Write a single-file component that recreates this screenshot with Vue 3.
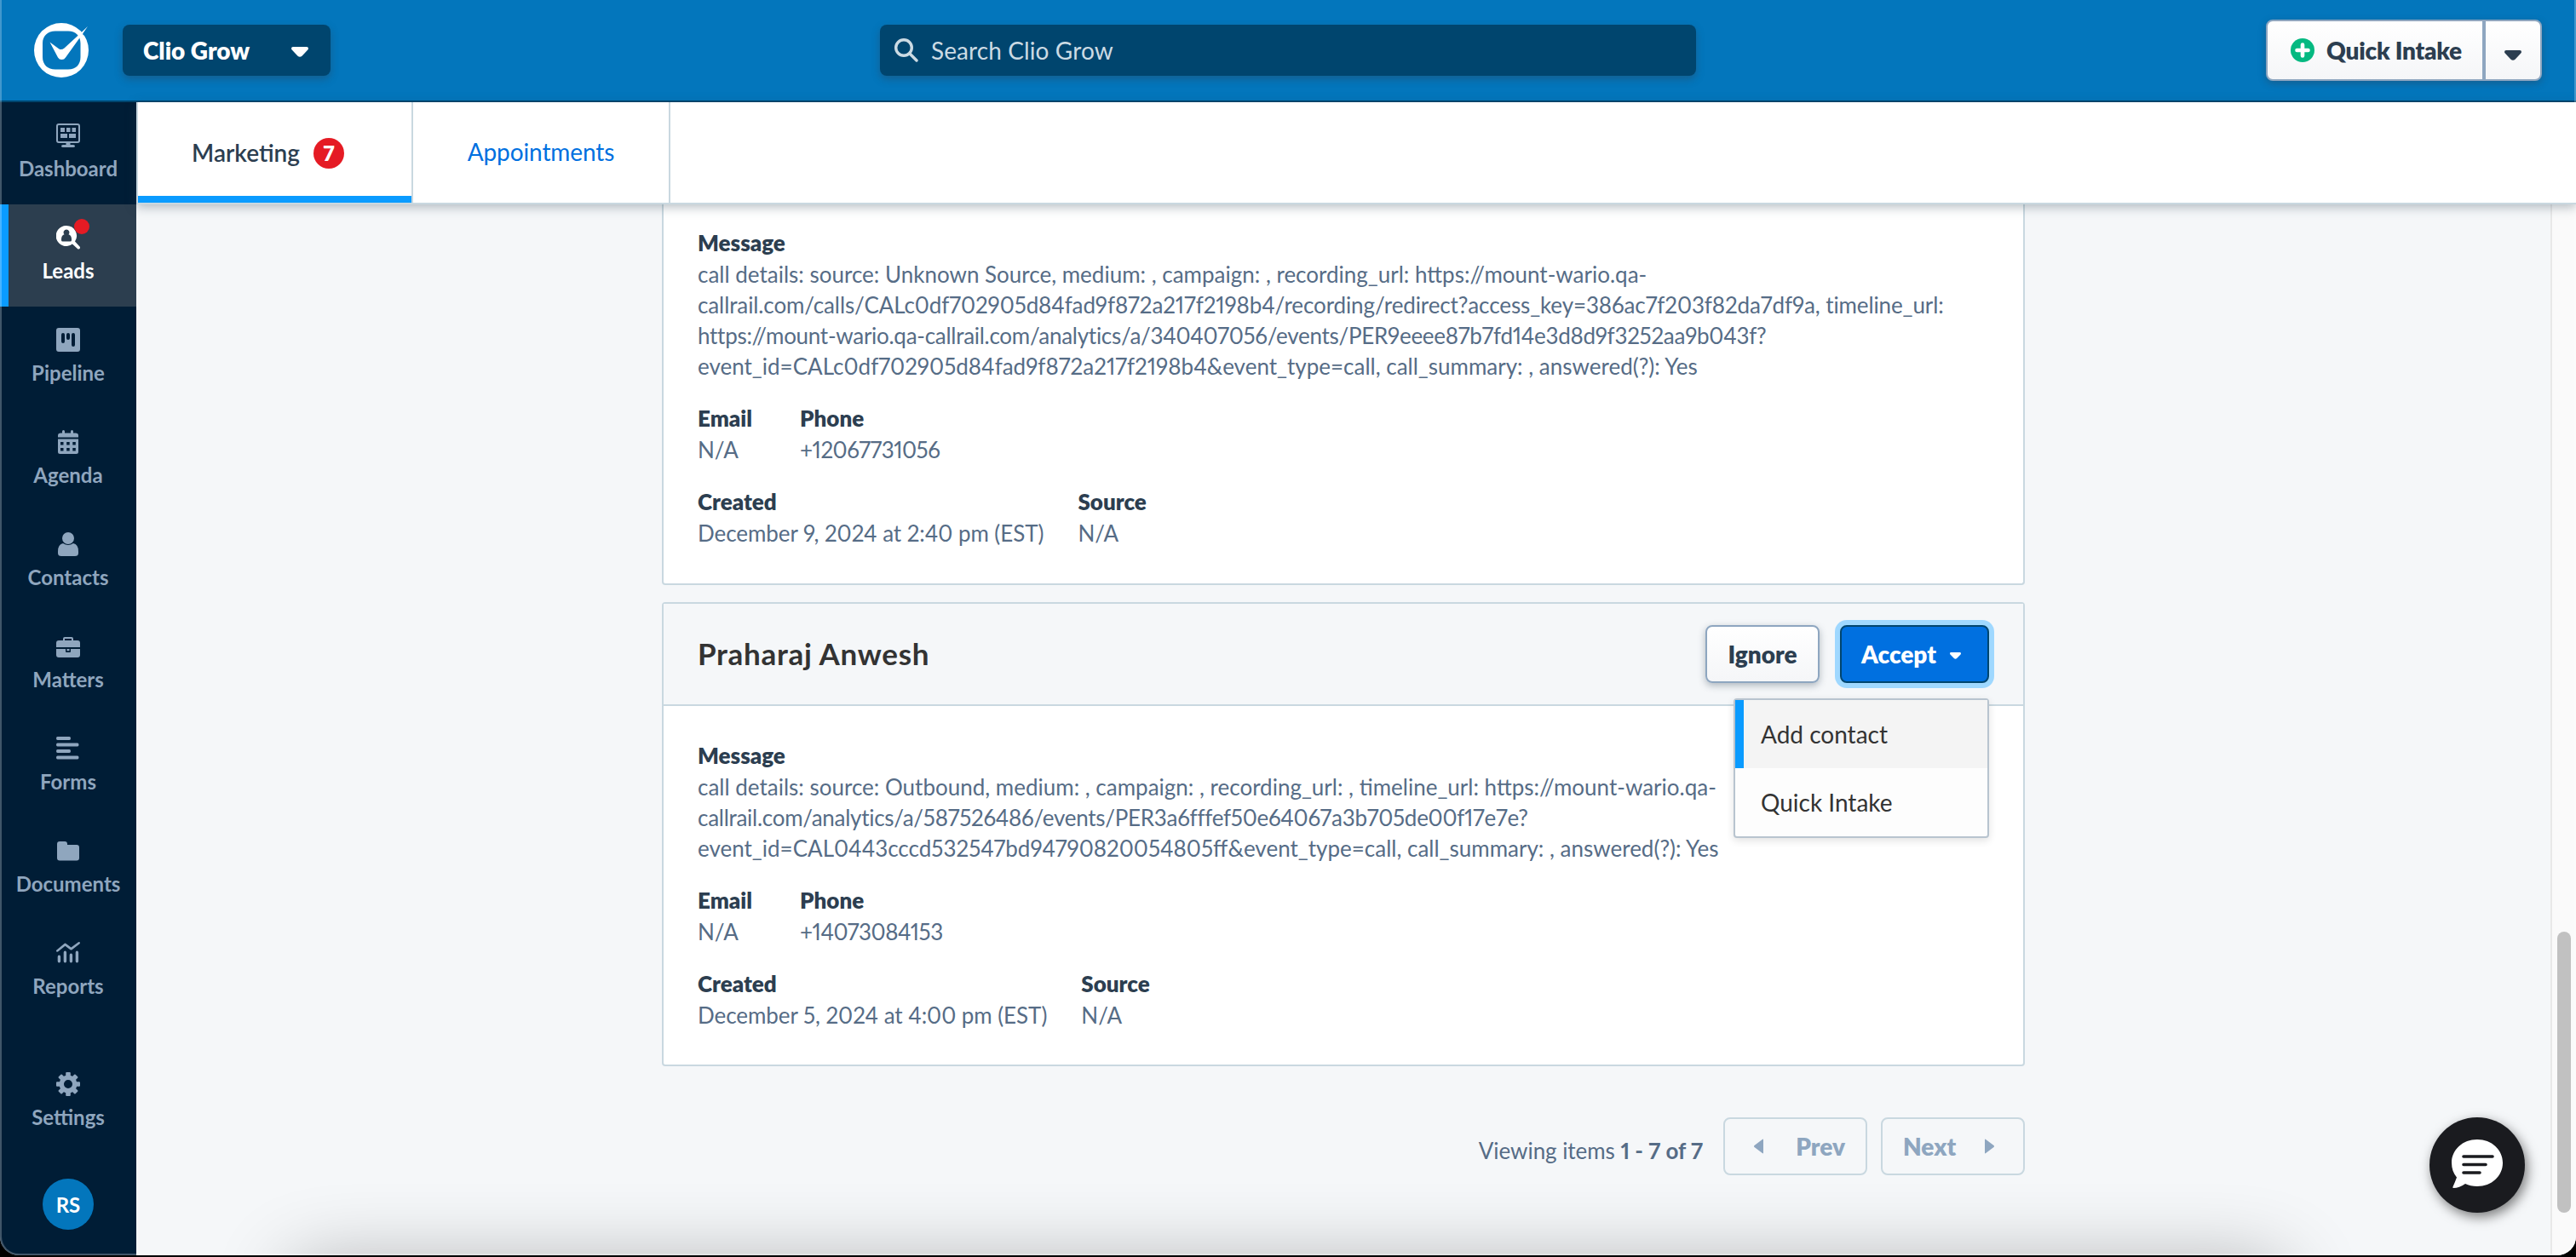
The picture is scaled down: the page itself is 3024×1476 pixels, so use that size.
<template>
  <div class="window">
    <header class="topbar">
      <svg class="logo" viewBox="38 25 68 68">
        <path
          fill="#fff"
          fill-rule="evenodd"
          d="M72 27a32 32 0 1 1 0 64a32 32 0 1 1 0-64zM65 36.5C56 36.5 50 42 50 51V67C50 76 56 81.500 65 81.500H80C89 81.500 94.500 76 94.500 67V51C94.500 42 89 36.500 80 36.500z"
        />
        <path d="M98 41l7-8" stroke="#0376bc" stroke-width="2.500" />
        <path fill="#fff" d="M58.500 49.500L69 57.200Q72 59.200 75.500 56.500L94 39.500L103 31L96 41L77 67.500Q75.500 70 72.500 70Q69.500 70 68 67.500z" />
      </svg>
      <button class="product-switch">
        <span class="product-name">Clio Grow</span>
        <svg class="caret" viewBox="0 0 20 12"><path :d="caretPath" /></svg>
      </button>
      <div class="search">
        <svg class="search-icon" viewBox="0 0 28 28">
          <circle cx="11" cy="11" r="9.300" />
          <path d="M18 18l8 8" />
        </svg>
        <span class="search-text">Search Clio Grow</span>
      </div>
      <div class="intake">
        <button class="intake-main">
          <svg class="plus" viewBox="0 0 28 28">
            <circle cx="14" cy="14" r="14" fill="#05b981" />
            <path d="M14 7.500v13M7.500 14h13" stroke="#fff" stroke-width="4.600" stroke-linecap="round" />
          </svg>
          <span class="intake-text">Quick Intake</span>
        </button>
        <button class="intake-more">
          <svg class="caret" viewBox="0 0 20 12"><path :d="caretPath" /></svg>
        </button>
      </div>
    </header>

    <div class="body">
      <nav class="sidebar">
        <a v-for="item in navItems" :key="item.label" class="nav-item" :class="{ active: item.active }">
          <span class="nav-icon">
            <svg viewBox="0 0 28 28"><path fill-rule="evenodd" :d="item.icon" /></svg>
            <i v-if="item.active" class="nav-dot"></i>
          </span>
          <span class="nav-label">{{ item.label }}</span>
        </a>
        <a class="nav-item settings">
          <span class="nav-icon">
            <svg viewBox="0 0 28 28">
              <path fill-rule="evenodd" d="M14 3.500a10.500 10.500 0 1 1 0 21a10.500 10.500 0 1 1 0-21zM14 9a5 5 0 1 0 0 10a5 5 0 1 0 0-10z" />
              <rect
                v-for="angle in gearAngles"
                :key="angle"
                x="11.200"
                y="0"
                width="5.600"
                height="7"
                rx="1"
                :transform="`rotate(${angle} 14 14)`"
              />
            </svg>
          </span>
          <span class="nav-label">Settings</span>
        </a>
        <div class="avatar">RS</div>
      </nav>

      <main class="main">
        <div class="tabs">
          <a class="tab current">Marketing <span class="count">7</span></a>
          <a class="tab link">Appointments</a>
        </div>

        <div class="scroll-area">
          <div class="content">
            <section v-for="lead in leads" :key="lead.phone" class="card" :class="{ cut: !lead.name }">
              <div v-if="lead.name" class="card-header">
                <h2 class="lead-name">{{ lead.name }}</h2>
                <div class="actions">
                  <button class="btn ignore">Ignore</button>
                  <button class="btn accept">
                    Accept
                    <svg viewBox="0 0 20 12"><path :d="caretPath" /></svg>
                  </button>
                  <ul class="menu">
                    <li class="menu-item hover">Add contact</li>
                    <li class="menu-item">Quick Intake</li>
                  </ul>
                </div>
              </div>
              <div class="card-body">
                <div class="field">
                  <div class="label">Message</div>
                  <div
                    v-for="line in lead.message"
                    :key="line"
                    class="value"
                    :class="{ analytics: line.includes('/analytics/'), recording: line.includes('/calls/') }"
                  >{{ line }}</div>
                </div>
                <div class="field-row">
                  <div class="field email">
                    <div class="label">Email</div>
                    <div class="value">N/A</div>
                  </div>
                  <div class="field">
                    <div class="label">Phone</div>
                    <div class="value phone">{{ lead.phone }}</div>
                  </div>
                </div>
                <div class="field-row">
                  <div class="field created">
                    <div class="label">Created</div>
                    <div class="value date">{{ lead.created }}</div>
                  </div>
                  <div class="field">
                    <div class="label">Source</div>
                    <div class="value">N/A</div>
                  </div>
                </div>
              </div>
            </section>

            <div class="pager">
              <span class="pager-text">Viewing items <b>1 - 7 of 7</b></span>
              <button class="page-btn">
                <svg viewBox="0 0 11 18"><path d="M11 1.500v15Q11 18 9.800 17L.5 10Q-.5 9 .5 8L9.800 1Q11 0 11 1.500z" /></svg>
                Prev
              </button>
              <button class="page-btn">
                Next
                <svg viewBox="0 0 11 18"><path d="M0 1.500v15Q0 18 1.200 17L10.500 10Q11.500 9 10.500 8L1.200 1Q0 0 0 1.500z" /></svg>
              </button>
            </div>
          </div>
          <div class="scrollbar"><div class="thumb"></div></div>
        </div>
      </main>
    </div>

    <div class="dock-shadow"></div>
    <button class="chat">
      <svg viewBox="0 0 60 58">
        <path fill="#fff" d="M30 0C47 0 60 12 60 27.500S47 55 30 55Q22 55 16 52Q9 57 2 57Q1 57 1.500 55.500Q4 50 6 44.500C2 40 0 34 0 27.500C0 12 13 0 30 0z" />
        <path d="M14 20h34M14 29.500h26M14 39h19" stroke="#1a1b1f" stroke-width="3.600" stroke-linecap="round" />
      </svg>
    </button>
    <div class="edge"></div>
  </div>
</template>

<script setup>
const caretPath = 'M2 0h16Q20 0 20 2Q20 2.800 19.300 3.500L12.500 10.700Q10 13 7.500 10.700L.7 3.500Q0 2.800 0 2Q0 0 2 0z'

const gearAngles = [0, 45, 90, 135, 180, 225, 270, 315]

const navItems = [
  {
    label: 'Dashboard',
    icon: 'M3 0h22q3 0 3 3v17q0 3-3 3h-8.500v2h3.500q2 0 2 1.500t-2 1.500h-12q-2 0-2-1.500t2-1.500h3.500v-2h-8.500q-3 0-3-3v-17q0-3 3-3zM3 2q-1 0-1 1v17q0 1 1 1h22q1 0 1-1v-17q0-1-1-1zM5 5h5v5h-5zM12 5h4.500v5h-4.500zM18.500 5h4.500v5h-4.500zM5 12h8v5h-8zM15 12h8v5h-8z',
  },
  {
    label: 'Leads',
    active: true,
    icon: 'M12 0a12 12 0 0 1 10 18.600l5.500 5.800q1 1.200 0 2.500q-1.400 1.200-2.600 0l-6-5.300A12 12 0 1 1 12 0zM12 4.500a3.400 3.400 0 0 0-2.500 5.700q-3.500 1.200-3.500 5.800v1q0 1.500 1.500 1.500h9q1.500 0 1.500-1.500v-1q0-4.600-3.500-5.800a3.400 3.400 0 0 0-2.500-5.700z',
  },
  {
    label: 'Pipeline',
    icon: 'M3 0h22q3 0 3 3v22q0 3-3 3h-22q-3 0-3-3v-22q0-3 3-3zM6 8v8q0 2 2 2t2-2v-8q0-2-2-2t-2 2zM12 8v4q0 2 2 2t2-2v-4q0-2-2-2t-2 2zM18 8v12q0 2 2 2t2-2v-12q0-2-2-2t-2 2z',
  },
  {
    label: 'Agenda',
    icon: 'M2 8.500v-2q0-3 3-3h2v-2q0-1.500 1.500-1.500t1.500 1.500v2h7v-2q0-1.500 1.500-1.500t1.500 1.500v2h3q3 0 3 3v2zM2 10.500h24v15q0 2.500-2.500 2.500h-19q-2.500 0-2.500-2.500zM5 14v3.500h3.500v-3.500zM12.200 14v3.500h3.500v-3.500zM19.300 14v3.500h3.500v-3.500zM5 21v3.500h3.500v-3.500zM12.200 21v3.500h3.500v-3.500zM19.300 21v3.500h3.500v-3.500z',
  },
  {
    label: 'Contacts',
    icon: 'M14 0a7 7 0 1 1 0 14a7 7 0 1 1 0-14zM8 13q6 4 12 0q6 1 6 9.500v2q0 3.500-4 3.500h-16q-4 0-4-3.500v-2q0-8.500 6-9.500z',
  },
  {
    label: 'Matters',
    icon: 'M3 7h5v-2q0-2 2-2h8q2 0 2 2v2h5q3 0 3 3v5h-28v-5q0-3 3-3zM10 5v2h8v-2zM0 17h11v3q0 1 1 1h4q1 0 1-1v-3h11v7q0 3-3 3h-22q-3 0-3-3zM12.500 17h3v2.200h-3z',
  },
  {
    label: 'Forms',
    icon: 'M1.500 0h14q1.500 0 1.500 2t-1.500 2h-14q-1.500 0-1.500-2t1.500-2zM1.500 7.500h23.500q1.500 0 1.500 2t-1.500 2h-23.500q-1.500 0-1.500-2t1.500-2zM1.500 15h14q1.500 0 1.500 2t-1.500 2h-14q-1.500 0-1.500-2t1.500-2zM1.500 22.500h23.500q1.500 0 1.500 2t-1.500 2h-23.500q-1.500 0-1.500-2t1.500-2z',
  },
  {
    label: 'Documents',
    icon: 'M4 3h6q3 0 3 3v1h11q3 0 3 3v12.500q0 3-3 3h-20q-3 0-3-3v-16.500q0-3 3-3z',
  },
  {
    label: 'Reports',
    icon: 'M.5 10.500L9.500 3Q10.500 2 11.500 3L17.500 7.500L26 1.200Q27.500.5 28 2Q28 2.800 27.500 3.200L18.500 10.200Q17.500 11 16.500 10.200L10.500 5.800L2 12.500Q.5 13 0 12Q-.2 11.200.5 10.500zM1.700 18.500q0-2 1.700-2t1.700 2v5q0 2-1.700 2t-1.700-2zM8.700 13.500q0-2 1.700-2t1.700 2v10q0 2-1.700 2t-1.700-2zM15.700 16.500q0-2 1.700-2t1.700 2v7q0 2-1.700 2t-1.700-2zM22.700 13.500q0-2 1.700-2t1.700 2v10q0 2-1.700 2t-1.700-2z',
  },
]

const leads = [
  {
    message: [
      'call details: source: Unknown Source, medium: , campaign: , recording_url: https://mount-wario.qa-',
      'callrail.com/calls/CALc0df702905d84fad9f872a217f2198b4/recording/redirect?access_key=386ac7f203f82da7df9a, timeline_url:',
      'https://mount-wario.qa-callrail.com/analytics/a/340407056/events/PER9eeee87b7fd14e3d8d9f3252aa9b043f?',
      'event_id=CALc0df702905d84fad9f872a217f2198b4&event_type=call, call_summary: , answered(?): Yes',
    ],
    phone: '+12067731056',
    created: 'December 9, 2024 at 2:40 pm (EST)',
  },
  {
    name: 'Praharaj Anwesh',
    message: [
      'call details: source: Outbound, medium: , campaign: , recording_url: , timeline_url: https://mount-wario.qa-',
      'callrail.com/analytics/a/587526486/events/PER3a6fffef50e64067a3b705de00f17e7e?',
      'event_id=CAL0443cccd532547bd94790820054805ff&event_type=call, call_summary: , answered(?): Yes',
    ],
    phone: '+14073084153',
    created: 'December 5, 2024 at 4:00 pm (EST)',
  },
]
</script>

<style>
html, body { margin: 0; background: #000; overflow: hidden; }
</style>

<style scoped>
* { box-sizing: border-box; }
.window { position: relative; width: 3024px; height: 1474px; border-radius: 0 0 22px 22px; overflow: hidden; background: #f5f7f9; font-family: Lato, "Liberation Sans", sans-serif; font-variant-numeric: proportional-nums; display: flex; flex-direction: column; }
button { font-family: inherit; margin: 0; padding: 0; border: 0; background: none; }

/* Top bar */
.topbar { height: 120px; flex: none; background: #0376bc; border-bottom: 2px solid #00456e; display: flex; align-items: center; padding: 0 40px 0 38px; }
.logo { width: 68px; height: 68px; }
.product-switch { display: flex; align-items: center; justify-content: space-between; width: 244px; height: 60px; margin-left: 38px; padding: 0 26px 0 24px; border-radius: 8px; background: #00456e; color: #fff; box-shadow: 0 4px 10px rgba(44, 62, 80, .4); }
.product-name { font-size: 28px; font-weight: 800; }
.caret { width: 20px; height: 12px; fill: currentColor; position: relative; top: 2px; }
.search { display: flex; align-items: center; width: 958px; height: 60px; margin-left: 645px; padding-left: 17px; gap: 15px; border-radius: 8px; background: #00456e; color: #ccdbe4; box-shadow: 0 4px 10px rgba(44, 62, 80, .4); }
.search-icon { width: 28px; height: 28px; fill: none; stroke: currentColor; stroke-width: 3.400; stroke-linecap: round; }
.search-text { font-size: 28px; letter-spacing: .1px; }
.intake { display: flex; margin-left: auto; color: #2c3e50; border-radius: 8px; box-shadow: 0 3px 8px rgba(44, 62, 80, .4); }
.intake-main, .intake-more { display: flex; align-items: center; height: 72px; border: 2px solid #8ea6c0; background: linear-gradient(#fff, #f5f6f8); color: inherit; }
.intake-main { width: 256px; padding-left: 27px; gap: 14px; border-radius: 8px 0 0 8px; }
.intake-more { width: 68px; justify-content: center; padding-top: 8px; border-radius: 0 8px 8px 0; }
.plus { width: 28px; height: 28px; }
.intake-text { font-size: 28px; font-weight: 800; letter-spacing: -.2px; white-space: nowrap; }

/* Sidebar */
.body { flex: 1; display: flex; min-height: 0; }
.sidebar { width: 160px; flex: none; background: #001d36; display: flex; flex-direction: column; align-items: stretch; }
.nav-item { height: 120px; padding-top: 25px; display: flex; flex-direction: column; align-items: center; color: #8fa6be; }
.nav-item.active { background: #2c3e4f; color: #fff; box-shadow: inset 10px 0 #0a9bff; }
.nav-icon { position: relative; width: 28px; height: 28px; }
.nav-icon svg { display: block; width: 28px; height: 28px; fill: currentColor; }
.nav-dot { position: absolute; left: 21px; top: -8px; width: 18px; height: 18px; border-radius: 50%; background: #e51b24; }
.nav-label { margin-top: 9px; font-size: 24px; line-height: 32px; font-weight: 700; }
.settings { margin-top: 34px; }
.avatar { width: 60px; height: 60px; margin: 30px auto 0; border-radius: 50%; background: #0376bc; color: #fff; font-size: 24px; font-weight: 700; line-height: 62px; text-align: center; }

/* Tabs */
.main { flex: 1; display: flex; flex-direction: column; min-width: 0; }
.tabs { position: relative; z-index: 2; display: flex; height: 120px; flex: none; background: #fff; border-left: 2px solid #c9d8e0; border-bottom: 2px solid #c9d8e0; box-shadow: 0 3px 12px rgba(44, 62, 80, .35); }
.tab { display: flex; align-items: center; justify-content: center; border-right: 2px solid #c9d8e0; font-size: 28px; }
.tab.current { width: 323px; padding: 0 16px 0 0; gap: 16px; color: #2c3e50; font-weight: 600; box-shadow: inset 0 -8px #0a9bff; }
.tab.link { width: 302px; padding-bottom: 2px; color: #0070e0; letter-spacing: -.1px; }
.count { width: 36px; height: 36px; margin-top: 2px; border-radius: 50%; background: #e51b24; color: #fff; font-size: 24px; font-weight: 800; line-height: 36px; text-align: center; }

/* Leads */
.scroll-area { flex: 1; display: flex; min-height: 0; }
.content { flex: 1; padding-left: 617px; }
.card { width: 1600px; margin-bottom: 20px; border: 2px solid #c9d8e0; border-radius: 4px; background: #fff; }
.card.cut { border-top: 0; border-radius: 0 0 4px 4px; }
.card.cut .card-body { padding-top: 27px; padding-bottom: 41px; }
.card-header { display: flex; align-items: center; justify-content: space-between; height: 120px; padding: 0 40px; background: #f5f7f9; border-bottom: 2px solid #c9d8e0; }
.lead-name { margin: 0; padding-bottom: 2px; font-size: 35px; font-weight: 700; letter-spacing: .7px; color: #333; }
.actions { position: relative; display: flex; gap: 24px; }
.btn { height: 68px; border-radius: 8px; font-size: 28px; font-weight: 800; }
.btn.ignore { width: 134px; border: 2px solid #8ea6c0; background: linear-gradient(#fff, #f5f6f8); color: #2c3e50; box-shadow: 0 3px 8px rgba(44, 62, 80, .35); }
.btn.accept { display: flex; align-items: center; gap: 16px; width: 175px; padding-left: 23px; border: 2px solid #00456e; background: #0070e0; color: #fff; box-shadow: 0 0 0 6px #9fd8ff; }
.btn.accept svg { width: 13px; height: 8px; fill: currentColor; margin-top: 3px; }
.menu { position: absolute; z-index: 1; top: 86px; right: 0; width: 300px; height: 164px; margin: 0; padding: 0; list-style: none; background: #fdfdfd; border: 2px solid #b8c4cf; border-radius: 4px; box-shadow: 0 3px 10px rgba(0, 0, 0, .12); }
.menu-item { height: 80px; padding-left: 30px; line-height: 80px; font-size: 28px; color: #333; }
.menu-item.hover { background: #f4f4f4; box-shadow: inset 10px 0 #0a9bff; }
.card-body { display: flex; flex-direction: column; gap: 25px; padding: 40px; }
.field-row { display: flex; }
.email { width: 120px; }
.created { margin-right: 40px; }
.label { height: 37px; font-size: 26px; line-height: 36px; font-weight: 800; color: #2c3e50; }
.value { font-size: 26px; line-height: 36px; color: #566c86; white-space: nowrap; }
.value.recording { letter-spacing: -.11px; }
.value.analytics { letter-spacing: -.28px; }
.value.phone { letter-spacing: -.5px; }
.value.date { letter-spacing: -.06px; }

/* Pager */
.pager { display: flex; width: 1600px; margin-top: 60px; justify-content: flex-end; align-items: center; gap: 16px; }
.pager-text { margin: 9px 8px 0 0; font-size: 26px; letter-spacing: -.05px; color: #566c86; }
.page-btn { display: flex; align-items: center; justify-content: space-between; width: 169px; height: 68px; padding: 0 24px; border: 2px solid #c9d8e0; border-radius: 8px; color: #8ea6c0; font-size: 28px; font-weight: 800; }
.page-btn svg { width: 11px; height: 18px; margin: 0 10px; fill: currentColor; }

.scrollbar { width: 30px; flex: none; padding: 854px 6px 0; border-left: 2px solid #e8e8e8; background: #fafafa; }
.thumb { width: 16px; height: 330px; border-radius: 8px; background: #c1c1c1; }

/* Overlays */
.dock-shadow { position: absolute; left: 340px; right: 340px; top: 1484px; height: 80px; border-radius: 30px; box-shadow: 0 0 90px rgba(0, 0, 0, .3); }
.chat { position: absolute; right: 60px; top: 1312px; display: flex; align-items: center; justify-content: center; width: 112px; height: 112px; padding-bottom: 2px; border-radius: 50%; background: #1a1b1f; box-shadow: 3px 5px 14px rgba(0, 0, 0, .5); }
.chat svg { width: 60px; height: 58px; fill: none; }
.edge { position: absolute; inset: 0; border: solid rgba(255, 255, 255, .25); border-width: 0 2px 2px; border-radius: 0 0 22px 22px; pointer-events: none; }
</style>
